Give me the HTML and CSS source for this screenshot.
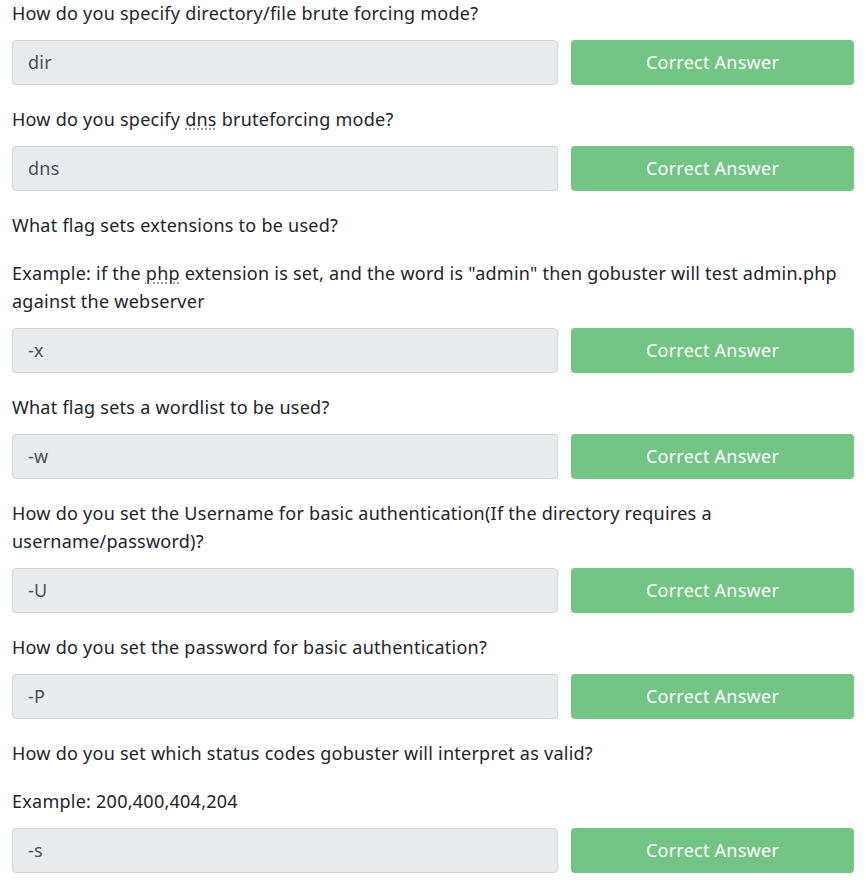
FILE: index.html
```html
<!DOCTYPE html>
<html lang="en">
<head>
<meta charset="utf-8">
<link rel="stylesheet" href="styles.css">
</head>
<body>
<div class="qa">
  <div class="task">
    <p class="q">How do you specify directory/file brute forcing mode?</p>
    <div class="row"><div class="answer">dir</div><div class="btn">Correct Answer</div></div>
  </div>
  <div class="task">
    <p class="q">How do you specify <abbr>dns</abbr> bruteforcing mode?</p>
    <div class="row"><div class="answer">dns</div><div class="btn">Correct Answer</div></div>
  </div>
  <div class="task">
    <p class="q">What flag sets extensions to be used?</p>
    <p class="q">Example: if the <abbr>php</abbr> extension is set, and the word is "admin" then gobuster will test admin.php against the webserver</p>
    <div class="row"><div class="answer">-x</div><div class="btn">Correct Answer</div></div>
  </div>
  <div class="task">
    <p class="q">What flag sets a wordlist to be used?</p>
    <div class="row"><div class="answer">-w</div><div class="btn">Correct Answer</div></div>
  </div>
  <div class="task">
    <p class="q">How do you set the Username for basic authentication(If the directory requires a username/password)?</p>
    <div class="row"><div class="answer">-U</div><div class="btn">Correct Answer</div></div>
  </div>
  <div class="task">
    <p class="q">How do you set the password for basic authentication?</p>
    <div class="row"><div class="answer">-P</div><div class="btn">Correct Answer</div></div>
  </div>
  <div class="task">
    <p class="q">How do you set which status codes gobuster will interpret as valid?</p>
    <p class="q">Example: 200,400,404,204</p>
    <div class="row"><div class="answer">-s</div><div class="btn">Correct Answer</div></div>
  </div>
</div>
</body>
</html>
```
FILE: styles.css
```css
html, body {
  margin: 0;
  padding: 0;
  background: #ffffff;
}
body {
  font-family: "Noto Sans", "Open Sans", sans-serif;
  font-size: 18px;
  letter-spacing: 0.25px;
  color: #212529;
}
.qa {
  padding: 0 12px;
  margin-top: -1px;
}
.task {
  margin-bottom: 20.5px;
}
.q {
  margin: 0 0 20px;
  line-height: 28px;
}
.q:last-of-type {
  margin-bottom: 12.5px;
}
abbr {
  text-decoration: underline dotted #8a8f94;
  text-underline-offset: 3px;
}
.row {
  display: grid;
  grid-template-columns: 1fr 283px;
  gap: 13px;
  height: 45px;
}
.answer {
  box-sizing: border-box;
  background: #e9ecef;
  border: 1px solid #ced4da;
  border-radius: 4px;
  padding: 0 15px;
  display: flex;
  align-items: center;
  color: #495057;
}
.btn {
  background: #72c585;
  color: #ffffff;
  border-radius: 4px;
  display: flex;
  align-items: center;
  justify-content: center;
}
```
